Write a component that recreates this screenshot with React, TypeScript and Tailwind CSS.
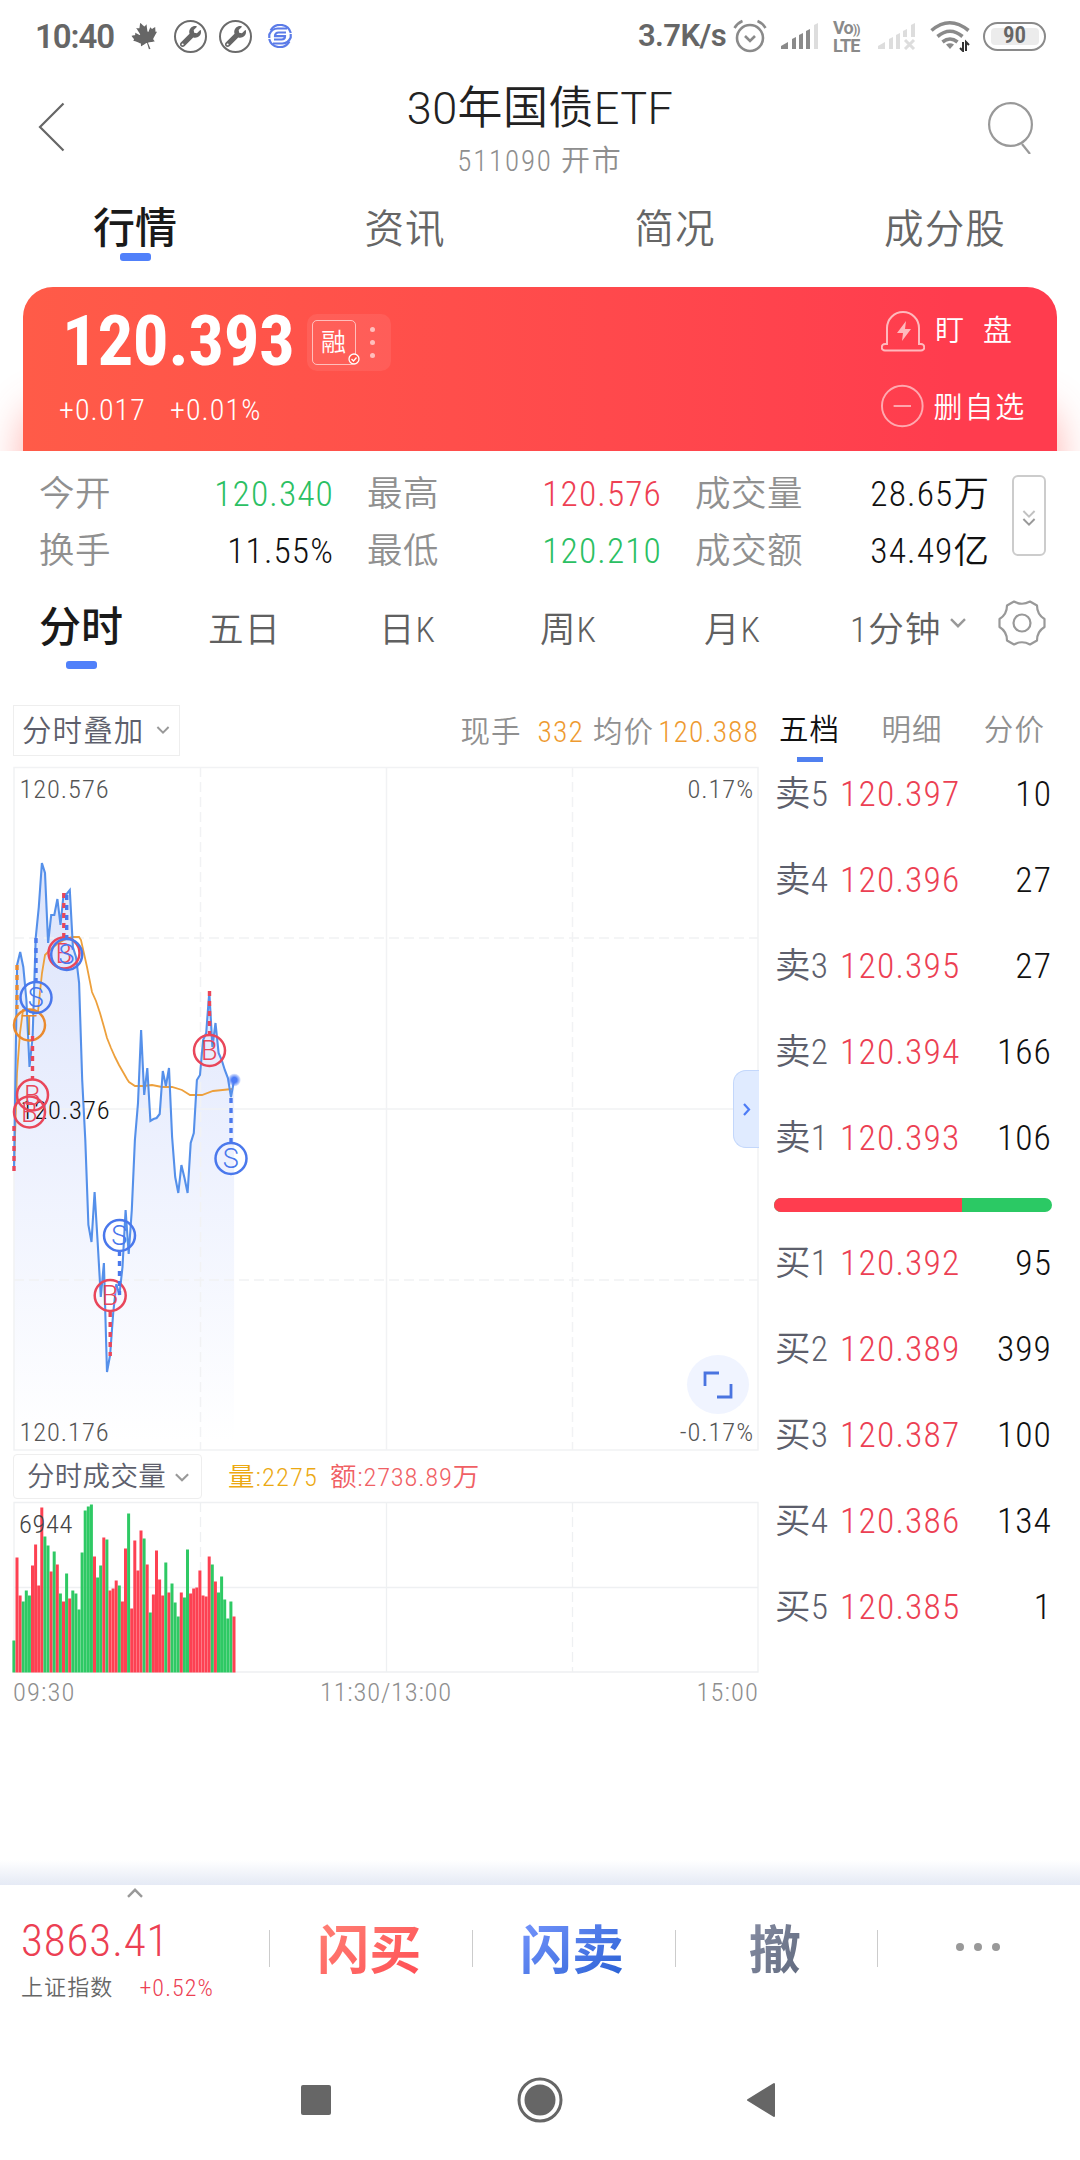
import { clsx } from "clsx";
import { FaCanadianMapleLeaf, FaWrench } from "react-icons/fa";

const STEP = 3.1;
const LEFT = 14;

// one entry per minute since 09:30
const prices = [
  1170, 965, 952, 967, 1000, 1067, 1037, 938, 907, 863, 873, 943, 915, 915,
  899, 925, 894, 894, 890, 947, 957, 983, 1080, 1140, 1225, 1242, 1192, 1243,
  1297, 1263, 1372, 1355, 1313, 1284, 1295, 1267, 1210, 1254, 1210, 1140, 1103,
  1030, 1095, 1068, 1121, 1119, 1118, 1114, 1071, 1086, 1068, 1137, 1177, 1193,
  1165, 1178, 1193, 1143, 1133, 1080, 1075, 1040, 1033, 992, 1047, 1023, 1053,
  1060, 1070, 1078, 1097, 1080,
];

const average =
  "14,1170 17,1073 20,1033 23,1010 26,1010 33,1012 38,1012 40,992 42,973 45,955 50,950 57,944 64,940 72,937 79,937 81,940 87,967 92,992 96,1001 100,1013 104,1027 107,1038 111,1048 115,1057 119,1065 123,1072 127,1079 129,1082 135,1086 143,1086 152,1085 162,1087 172,1087 182,1090 190,1095 202,1095 213,1091 232,1089";

// g = down minute, r = up minute
const volumes =
  "g32 r115 r77 g71 g82 g77 r107 r128 r87 r165 g136 g127 r101 g121 r108 g79 r71 g99 r74 g82 g79 g63 g120 g162 g166 g168 r116 g95 g107 r135 g133 r82 r84 r92 g87 r71 r124 g159 r64 r132 r102 r142 g134 r108 g60 r78 r122 r93 r77 g110 r80 g89 g70 g56 r80 g75 g123 r79 r84 r85 r102 r77 r76 r116 g108 r91 g80 g96 g73 g54 g71 r56".split(
    " "
  );

const RED = "#e9465a";
const BLUE = "#4a78ec";
const ORANGE = "#ea8a2e";

const trades = [
  { type: "T", color: ORANGE, cx: 29.5, cy: 1025, x: 17, from: 965, to: 1009 },
  { type: "S", color: BLUE, cx: 36, cy: 997.5, x: 36, from: 938, to: 982 },
  { type: "B", color: RED, cx: 32.5, cy: 1095, x: 32.5, from: 1036, to: 1079 },
  { type: "B", color: RED, cx: 29.5, cy: 1112, x: 14, from: 1126, to: 1171 },
  { type: "B", color: RED, cx: 64, cy: 953, x: 63.8, from: 893, to: 937 },
  { type: "S", color: BLUE, cx: 66.7, cy: 954.5, x: 66.7, from: 895, to: 938 },
  { type: "B", color: RED, cx: 110.2, cy: 1295.5, x: 110.2, from: 1312, to: 1356 },
  { type: "S", color: BLUE, cx: 119.5, cy: 1235.5, x: 119.5, from: 1251, to: 1295 },
  { type: "B", color: RED, cx: 209.5, cy: 1050.5, x: 209.5, from: 991, to: 1035 },
  { type: "S", color: BLUE, cx: 231, cy: 1158.5, x: 231, from: 1098, to: 1142 },
];

const sells = [
  ["卖5", "120.397", "10"],
  ["卖4", "120.396", "27"],
  ["卖3", "120.395", "27"],
  ["卖2", "120.394", "166"],
  ["卖1", "120.393", "106"],
];

const buys = [
  ["买1", "120.392", "95"],
  ["买2", "120.389", "399"],
  ["买3", "120.387", "100"],
  ["买4", "120.386", "134"],
  ["买5", "120.385", "1"],
];

const stats = [
  ["今开", "120.340", "text-[#2bc063]"],
  ["最高", "120.576", "text-[#ee4053]"],
  ["成交量", "28.65万", "text-[#111]"],
  ["换手", "11.55%", "text-[#111]"],
  ["最低", "120.210", "text-[#2bc063]"],
  ["成交额", "34.49亿", "text-[#111]"],
];

function Chevron({ className }: { className?: string }) {
  return (
    <svg viewBox="0 0 16 10" className={className} fill="none" stroke="#999" strokeWidth="2.4">
      <path d="M1 1.2 8 8.2 15 1.2" />
    </svg>
  );
}

function WrenchBadge() {
  return (
    <span className="flex h-[33px] w-[33px] items-center justify-center rounded-full border-2 border-[#6b6b6b]">
      <FaWrench className="h-[21px] w-[21px]" />
    </span>
  );
}

function StatusBar() {
  return (
    <div className="flex h-[72px] items-center pl-[35px] pr-[34px] font-medium tracking-normal text-[#666] [font-stretch:100%]">
      <div className="w-[96px] pt-[2px] text-[33px] font-semibold tracking-[-1.1px]">10:40</div>
      <FaCanadianMapleLeaf className="h-[28px] w-[28px] -rotate-[20deg]" />
      <div className="ml-[15px] flex gap-3">
        <WrenchBadge />
        <WrenchBadge />
      </div>
      <svg viewBox="0 0 24 24" className="ml-[16px] h-6 w-6" fill="none" stroke="#5b7be8" strokeWidth="2.2">
        <path d="M22.800 9A11 11 0 0 0 2.600 6.500M1.200 15a11 11 0 0 0 20.200 2.500" />
        <path d="M1.300 14V10.500q2.500-6 8.500-6H19M22.700 10v3.500q-2.500 6-8.500 6H5" />
        <path d="M18 8.500h-7.500A3.500 3.500 0 0 0 7 12.200h10q0 3.300-3.500 3.300H6" />
      </svg>

      <div className="ml-auto text-[31px] font-semibold tracking-[-0.6px]">3.7K/s</div>
      <svg viewBox="0 0 34 34" className="ml-[7px] h-[34px] w-[34px]" fill="none" stroke="#8a8a8a" strokeWidth="2.600">
        <circle cx="17" cy="19" r="13" />
        <path d="m12 17 5 5 5-5M1.500 9q3-5 8-7M32.500 9q-3-5-8-7" />
      </svg>
      <svg viewBox="0 0 38 28" className="ml-[14px] h-[28px] w-[38px]" fill="#8a8a8a">
        <path d="M0 27v-3l7-4v7zM11 27V17l4-2v12zM18 27V13l4-2v16zM25 27V9l4-2v20z" />
        <path d="M33 27V3l4-2v26z" fill="#ddd" />
      </svg>
      <div className="ml-[14px] flex w-[32px] flex-col text-[18px] font-bold leading-[15px] text-[#8a8a8a]">
        <span className="whitespace-nowrap tracking-[-0.8px]">
          Vo<span className="text-[12px] tracking-[-1px]">))</span>
        </span>
        <span className="tracking-[-0.8px]">LTE</span>
      </div>
      <svg viewBox="0 0 38 28" className="ml-[13px] h-[28px] w-[38px]" fill="#ddd">
        <path d="M0 27v-3l7-4v7zM11 27V17l4-2v12zM18 27V13l4-2v16zM25 15V9l4-2v8zM33 15V3l4-2v14z" />
        <path d="m27 18 9 9m0-9-9 9" stroke="#ddd" strokeWidth="3" />
      </svg>
      <svg viewBox="0 0 40 32" className="ml-[14px] h-[32px] w-[40px]" fill="none" stroke="#8a8a8a" strokeWidth="3.600">
        <path d="M1.500 10.500q18-15.500 37 0M7.500 16.500q12.500-10.500 25 0M12.500 22q7.500-6 15 0" />
        <path d="M16 24.500q4-2.500 8 0L20 29z" fill="#8a8a8a" stroke="none" />
        <path d="M33 22v9l-3-3M36 31v-9l3 3" stroke="#333" strokeWidth="2" />
      </svg>
      <div className="ml-[13px] flex h-[29px] w-[63px] items-center justify-center rounded-full border-[2.500px] border-[#8a8a8a]">
        <span className="flex h-[17px] w-[48px] items-center justify-center rounded bg-[#ececec] text-[23px] font-semibold [font-stretch:85%]">
          90
        </span>
      </div>
    </div>
  );
}

function Header() {
  return (
    <div className="flex h-[118px] items-start justify-between pl-[38px] pr-[47px]">
      <svg viewBox="0 0 27 50" className="mt-[30px] h-[50px] w-[27px]" fill="none" stroke="#666" strokeWidth="2.200">
        <path d="M25.500 1.500 2 25l23.500 23.500" />
      </svg>
      <div className="flex flex-col items-center pl-[28px]">
        <h1 className="mt-[13px] h-[48px] text-[45px] leading-[48px] tracking-[0.4px] text-[#222] [font-stretch:95%]">
          30年国债ETF
        </h1>
        <div className="mt-[13px] text-[29px] leading-[30px] tracking-[1.8px] text-[#8e8e8e]">511090 开市</div>
      </div>
      <svg viewBox="0 0 46 52" className="mt-[30px] h-[52px] w-[46px]" fill="none" stroke="#999" strokeWidth="2.200">
        <circle cx="23.500" cy="22.500" r="21.400" />
        <path d="m35 42 8 10" />
      </svg>
    </div>
  );
}

function MainTabs() {
  return (
    <div className="grid h-[97px] grid-cols-4 text-[39.500px] leading-none text-[#666]">
      {["行情", "资讯", "简况", "成分股"].map((name, i) => (
        <div key={name} className="flex flex-col items-center">
          <span
            className={clsx(
              "h-[63px] leading-[60px]",
              i === 0 ? "pt-[9px] text-[42px] font-medium tracking-normal text-[#1a1a1a]" : "pt-[10px]"
            )}
          >
            {name}
          </span>
          {i === 0 && <span className="h-2 w-[31px] rounded-[3px] bg-[#5080fa]" />}
        </div>
      ))}
    </div>
  );
}

function PriceCard() {
  return (
    <div className="h-[164px] overflow-hidden px-[23px]">
      <div className="flex h-[210px] justify-between rounded-[30px] bg-linear-to-r from-[#ff5b48] to-[#ff3c4e] to-90% pl-9 pr-[31px] text-white shadow-[0_120px_40px_rgba(255,80,70,0.45)]">
        <div>
          <div className="flex pt-[27px]">
            <span className="w-[248px] pl-[3px] text-[71px] font-bold leading-[54px] tracking-[-0.5px] [font-stretch:81%]">
              120.393
            </span>
            <div className="flex h-[57px] w-[84px] items-center rounded-[10px] bg-white/8 pl-[5px]">
              <div className="relative flex h-[45px] w-[44px] items-center justify-center rounded-[5px] border border-white/60 text-[25px]">
                融
                <svg viewBox="0 0 12 12" className="absolute -bottom-px -right-[5px] h-3 w-3" fill="#ff5549" stroke="#fff" strokeWidth="1.300">
                  <circle cx="6" cy="6" r="5" />
                  <path d="m3.500 6 2 2 3-3.500" fill="none" />
                </svg>
              </div>
              <div className="ml-[14px] flex flex-col gap-2">
                <i className="h-[5px] w-[5px] rounded-full bg-white/60" />
                <i className="h-[5px] w-[5px] rounded-full bg-white/60" />
                <i className="h-[5px] w-[5px] rounded-full bg-white/60" />
              </div>
            </div>
          </div>
          <div className="mt-[23px] flex gap-[24px] text-[30px] leading-[32px] [font-stretch:82%]">
            <span>+0.017</span>
            <span>+0.01%</span>
          </div>
        </div>
        <div className="w-[145px] whitespace-nowrap text-[29px] leading-[44px]">
          <div className="flex items-center pt-[22px]">
            <svg viewBox="0 0 44 42" className="h-[42px] w-[44px]" fill="none" stroke="#ffb9bd" strokeWidth="2">
              <path d="M6 34V18a16 16 0 0 1 32 0v16h2a3.300 3.300 0 0 1 0 6.600H4A3.300 3.300 0 0 1 4 34z" />
              <path d="m25 11-9 12h6l-1 8 9-12h-6z" fill="#ffb9bd" stroke="none" />
            </svg>
            <span className="ml-[10px] flex w-[78px] justify-between">
              <span>盯</span>
              <span>盘</span>
            </span>
          </div>
          <div className="mt-[28px] flex items-center">
            <svg viewBox="0 0 44 46" className="h-[46px] w-[44px]" fill="none" stroke="#ffa9b0" strokeWidth="2">
              <circle cx="22" cy="23" r="21" />
              <path d="M13 23h18" />
            </svg>
            <span className="ml-[10px] mt-[5px] tracking-[1.800px]">删自选</span>
          </div>
        </div>
      </div>
    </div>
  );
}

function Stats() {
  return (
    <div className="flex h-[144px] pl-[39px] pr-[34px] pt-[15px]">
      <div className="grid w-[951px] grid-cols-3 content-start gap-x-[33px] text-[35.500px] leading-[56px]">
        {stats.map(([label, value, color]) => (
          <div key={label} className="flex h-[57px] justify-between">
            <span className="tracking-[0.5px] text-[#909090]">{label}</span>
            <span className={color}>{value}</span>
          </div>
        ))}
      </div>
      <div className="ml-[22px] mt-[9px] flex h-[81px] w-[34px] shrink-0 flex-col items-center justify-center rounded-[6px] border-2 border-[#ccc] pt-1">
        <Chevron className="h-2 w-4 opacity-60" />
        <Chevron className="h-2 w-4" />
      </div>
    </div>
  );
}

function PeriodTabs() {
  return (
    <div className="flex h-[110px] pl-[39px] text-[35.500px] leading-[70px] text-[#606060]">
      <div className="flex w-[84px] flex-col items-center text-[42px] font-medium leading-[64px] tracking-normal text-[#1a1a1a]">
        <span className="h-[66px] pt-[1px]">分时</span>
        <span className="h-2 w-[31px] rounded-[3px] bg-[#5080fa]" />
      </div>
      <span className="ml-[85px] w-[171px]">五日</span>
      <span className="w-[161px]">日K</span>
      <span className="w-[164px]">周K</span>
      <span className="w-[146px]">月K</span>
      <span className="w-[100px]">1分钟</span>
      <Chevron className="mt-[23px] h-[10px] w-4" />
      <svg viewBox="0 0 48 48" className="ml-[32px] mt-1 h-[48px] w-[48px]" fill="none" stroke="#999" strokeWidth="2.200">
        <path d="M16 2.500q8 4.500 16 0l7 4q0 9 7.500 13.500v8Q39 32.500 39 41.500l-7 4q-8-4.500-16 0l-7-4Q9 32.500 1.500 28v-8Q9 15.500 9 6.500z" strokeLinejoin="round" />
        <circle cx="24" cy="24" r="8.500" />
      </svg>
    </div>
  );
}

function PriceChart() {
  const line = prices.map((y, i) => `${(LEFT + i * STEP).toFixed(1)},${y}`).join(" ");
  const end = LEFT + (prices.length - 1) * STEP;

  return (
    <div className="relative mt-3 h-[684px] w-[746px] text-[26.500px] leading-none tracking-[0.9px] text-[#555]">
      <svg viewBox="13 767 746 684" className="h-[684px] w-[746px] overflow-visible" fill="none">
        <defs>
          <linearGradient id="area" x1="0" y1="863" x2="0" y2="1440" gradientUnits="userSpaceOnUse">
            <stop offset="0" stopColor="#dce4fb" />
            <stop offset=".5" stopColor="#edf1fe" />
            <stop offset="1" stopColor="#fff" />
          </linearGradient>
          <radialGradient id="halo">
            <stop offset=".4" stopColor="#4d7cf6" />
            <stop offset="1" stopColor="#4d7cf6" stopOpacity="0.1" />
          </radialGradient>
        </defs>
        <polygon points={`14,1450 ${line} ${end},1450`} fill="url(#area)" />
        <g stroke="#f1f2f4" strokeWidth="1.500">
          <path d="M14 767.500H758V1450H14zM386.500 767v683M14 1109h744" />
          <path d="M200.500 767v683M572.500 767v683" strokeDasharray="10 5" />
          <path d="M14 938h744M14 1280h744" strokeDasharray="10 5" />
        </g>
        <polyline points={average} stroke="#eda03c" strokeWidth="1.800" />
        <polyline points={line} stroke="#5590ea" strokeWidth="2.100" />
        <circle cx="234.300" cy="1080" r="6.500" fill="url(#halo)" />
        <text x="20.500" y="1119" fill="#111" fontSize="26.500">120.376</text>
        {trades.map((t, i) => (
          <g key={i} stroke={t.color} strokeWidth="2.500">
            <path d={`M${t.x} ${t.from}V${t.to}`} strokeWidth="3.400" strokeDasharray="5 5" />
            <circle cx={t.cx} cy={t.cy} r="15.500" />
            <text x={t.cx + 0.3} y={t.cy + 9.5} fontSize="27" textAnchor="middle" fill={t.color} stroke="none" className="[font-stretch:90%]">
              {t.type}
            </text>
          </g>
        ))}
      </svg>
      <span className="absolute left-[6.500px] top-[9px]">120.576</span>
      <span className="absolute bottom-[6px] left-[6.500px]">120.176</span>
      <span className="absolute right-[5px] top-[9px] [font-stretch:84%]">0.17%</span>
      <span className="absolute bottom-[6px] right-[5px] [font-stretch:84%]">-0.17%</span>
      <div className="absolute right-0 top-[303px] flex h-[78px] w-[26px] items-center justify-center rounded-l-[13px] border border-r-0 border-[#c3d7fb] bg-[#e0ebff]">
        <svg viewBox="0 0 8 13" className="h-[13px] w-2" fill="none" stroke="#4d7cf6" strokeWidth="2.200">
          <path d="m1 1 5 5.500-5 5.500" />
        </svg>
      </div>
      <div className="absolute right-[10px] top-[588px] flex h-[59px] w-[62px] items-center justify-center rounded-[50%] bg-[#f0f4ff]">
        <svg viewBox="0 0 30 28" className="h-[28px] w-[30px]" fill="none" stroke="#4a74e0" strokeWidth="2.800">
          <path d="M2 15V2h14M28 13v13H14" />
        </svg>
      </div>
    </div>
  );
}

function VolumeChart() {
  return (
    <div className="relative mt-[4px] h-[171px] w-[746px] text-[26.500px] leading-none tracking-[0.6px] text-[#444]">
      <svg viewBox="13 1502 746 171" className="h-[171px] w-[746px] overflow-visible" fill="none">
        <g stroke="#eef0f2" strokeWidth="1.300">
          <path d="M14 1502.500H758V1672H14zM386.500 1502v170M14 1587.500h744" />
          <path d="M200.500 1502v170M572.500 1502v170" strokeDasharray="10 5" />
        </g>
        {volumes.map((v, i) => {
          const h = Number(v.slice(1));
          return (
            <rect
              key={i}
              x={12.4 + i * STEP}
              y={1672.5 - h}
              width="3"
              height={h}
              fill={v[0] === "g" ? "#2ec964" : "#fd4152"}
            />
          );
        })}
      </svg>
      <span className="absolute left-[6px] top-[9px]">6944</span>
    </div>
  );
}

function BookRow({ row }: { row: string[] }) {
  return (
    <div className="flex h-[86px] items-center pl-px pt-px text-[35.500px] text-[#111]">
      <span className="w-[65px] tracking-[0.3px] text-[#5d5f6c]">{row[0]}</span>
      <span className="tracking-[1.2px] text-[#ec4053]">{row[1]}</span>
      <span className="ml-auto">{row[2]}</span>
    </div>
  );
}

function OrderBook() {
  return (
    <div className="ml-[15px] w-[278px] leading-none">
      <div className="flex h-[50px] justify-between pl-[5px] pr-[7px] text-[29.500px] leading-[51px] text-[#909090]">
        <span className="text-[#111]">五档</span>
        <span>明细</span>
        <span>分价</span>
      </div>
      <div className="ml-[23px] mt-[2px] h-[5px] w-[26px] bg-[#5080f0]" />
      <div className="-mt-[11px]">
        {sells.map((row) => (
          <BookRow key={row[0]} row={row} />
        ))}
      </div>
      <div className="mb-[18px] mt-[17px] flex h-[14px] overflow-hidden rounded-full bg-[#2bc964]">
        <div className="w-[188px] bg-[#ff3d4f]" />
      </div>
      <div className="-mt-[10px]">
        {buys.map((row) => (
          <BookRow key={row[0]} row={row} />
        ))}
      </div>
    </div>
  );
}

function ChartArea() {
  return (
    <div className="flex h-[1155px] pl-[13px]">
      <div className="w-[746px]">
        <div className="flex h-[50px] items-center text-[29.500px] leading-none text-[#909090]">
          <div className="flex h-[51px] w-[167px] items-center border border-[#eee] pl-[8px] pt-[3px] text-[#5d5f6c]">
            分时叠加
            <Chevron className="-mt-1 ml-[12px] h-2 w-[14px]" />
          </div>
          <span className="ml-auto pt-[5px]">现手</span>
          <span className="ml-[16px] pt-[5px] text-[#ee9a30] [font-stretch:82%]">332</span>
          <span className="ml-[9px] pt-[5px]">均价</span>
          <span className="ml-[4px] pt-[5px] text-[#ee9a30] [font-stretch:82%]">120.388</span>
        </div>
        <PriceChart />
        <div className="mt-[3px] flex h-[44px] items-center text-[26.500px] leading-none">
          <div className="flex h-[45px] w-[189px] items-center rounded border border-[#eee] pl-[13px] pt-[2px] text-[27.500px] tracking-[0.3px] text-[#5d5f6c]">
            分时成交量
            <Chevron className="ml-[9px] h-[9px] w-[14px]" />
          </div>
          <span className="ml-[26px] pt-[2px] text-[#eca912]">量:2275</span>
          <span className="ml-[12px] pt-[2px] tracking-[0.8px] text-[#f06064]">额:2738.89万</span>
        </div>
        <VolumeChart />
        <div className="mt-[4px] flex justify-between text-[26.500px] leading-[30px] text-[#8e8e8e]">
          <span>09:30</span>
          <span className="tracking-[0.8px]">11:30/13:00</span>
          <span>15:00</span>
        </div>
      </div>
      <OrderBook />
    </div>
  );
}

function BottomBar() {
  return (
    <div className="flex h-[186px]">
      <div className="flex w-[269px] flex-col pl-[21px]">
        <Chevron className="ml-[106px] mt-[3px] h-[10px] w-[16px] rotate-180" />
        <span className="mt-[13px] text-[45px] leading-[60px] tracking-[0.9px] text-[#ec4053]">3863.41</span>
        <div className="mt-[7px] flex items-center whitespace-nowrap text-[22px] leading-[20px] text-[#666]">
          上证指数
          <span className="ml-[26px] text-[24px] text-[#ec4053]">+0.52%</span>
        </div>
      </div>
      <div className="grid h-[126px] grow grid-cols-4 text-[52px] font-bold tracking-normal">
        <Action>
          <span className="bg-linear-to-br from-[#ff8478] to-[#ff4450] bg-clip-text text-transparent">闪买</span>
        </Action>
        <Action>
          <span className="bg-linear-to-br from-[#7a98ff] to-[#1d5bd0] bg-clip-text text-transparent">闪卖</span>
        </Action>
        <Action>
          <span className="bg-linear-to-br from-[#8a90a6] to-[#5c667a] bg-clip-text text-transparent">撤</span>
        </Action>
        <Action>
          <span className="-mt-[9px] flex gap-[10px]">
            <i className="h-2 w-2 rounded-full bg-[#999]" />
            <i className="h-2 w-2 rounded-full bg-[#999]" />
            <i className="h-2 w-2 rounded-full bg-[#999]" />
          </span>
        </Action>
      </div>
    </div>
  );
}

function Action({ children }: { children: React.ReactNode }) {
  return (
    <div className="flex items-center">
      <span className="h-[37px] w-px bg-[#ccc]" />
      <span className="flex grow justify-center pr-[3px] pt-[8px]">{children}</span>
    </div>
  );
}

function NavBar() {
  return (
    <div className="flex h-[89px] items-start pl-[301px] pt-[6px] text-[#666]">
      <span className="mt-[8px] h-[30px] w-[30px] rounded-[2px] bg-[#666]" />
      <svg viewBox="0 0 46 46" className="ml-[186px] h-[46px] w-[46px]" fill="#666">
        <circle cx="23" cy="23" r="15.500" />
        <circle cx="23" cy="23" r="21" fill="none" stroke="#666" strokeWidth="3" />
      </svg>
      <svg viewBox="0 0 30 36" className="ml-[183px] mt-[5px] h-[36px] w-[30px]" fill="#666" stroke="#666" strokeWidth="2" strokeLinejoin="round">
        <path d="M2 18 28 2v32z" />
      </svg>
    </div>
  );
}

export default function App() {
  return (
    <div className="h-[2160px] w-[1080px] overflow-hidden bg-white font-['Roboto','Noto_Sans_CJK_SC',sans-serif] font-[360] tracking-[1.1px] [font-stretch:79%]">
      <StatusBar />
      <Header />
      <MainTabs />
      <PriceCard />
      <Stats />
      <PeriodTabs />
      <ChartArea />
      <div className="h-[25px] bg-linear-to-b from-white to-[#e5eaf5]" />
      <BottomBar />
      <NavBar />
    </div>
  );
}
